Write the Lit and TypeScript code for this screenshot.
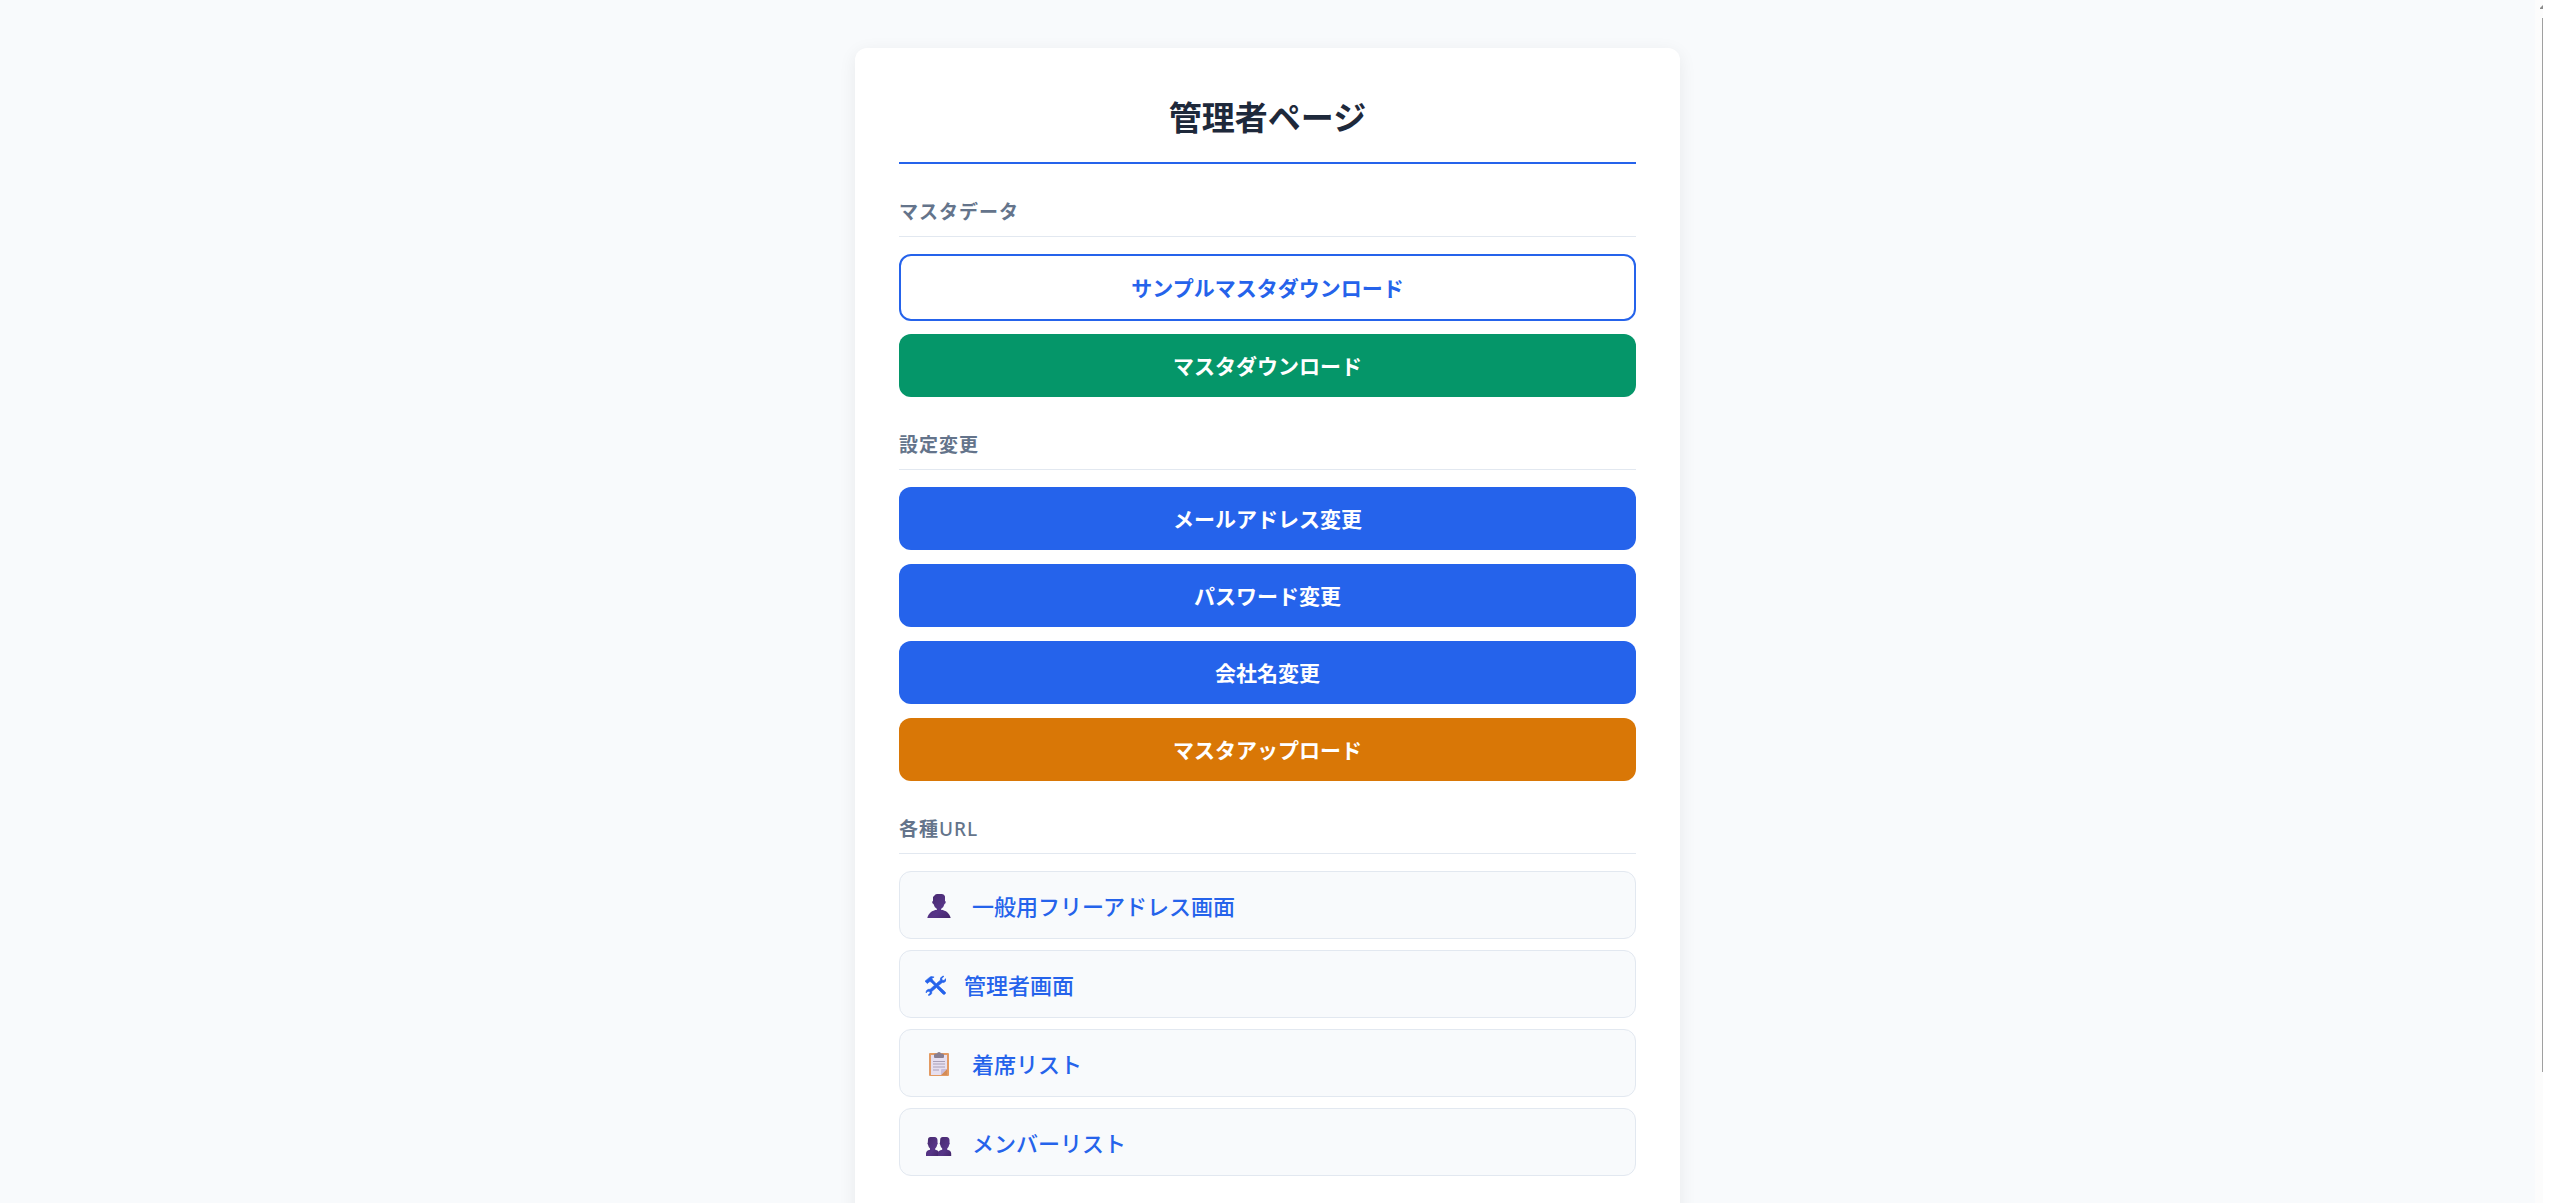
import { LitElement, html, css, svg } from "lit";
import { customElement } from "lit/decorators.js";

interface Action { label: string; tone: string; }

const masterActions: Action[] = [
  { label: "サンプルマスタダウンロード", tone: "outline" },
  { label: "マスタダウンロード", tone: "green" },
];

const settingActions: Action[] = [
  { label: "メールアドレス変更", tone: "blue" },
  { label: "パスワード変更", tone: "blue" },
  { label: "会社名変更", tone: "blue" },
  { label: "マスタアップロード", tone: "orange" },
];

const gradient = (id: string) => svg`<defs><linearGradient id=${id} x1="0" y1="0" x2="1" y2="1">
  <stop offset="0" stop-color="#45286b"/><stop offset="0.6" stop-color="#573588"/><stop offset="1" stop-color="#43256a"/>
</linearGradient></defs>`;

const userIcon = html`<svg class="icon" viewBox="0 -1 30 30" aria-hidden="true">
  ${gradient("user-fill")}
  <path fill="url(#user-fill)" d="M10.5 4.5Q11 3 13 3h5q2.500 0 3 2.500v4.500q1 .3.7 1.600-.3 1.400-1.200 1.500-.6 3.200-3.500 4.900v.7c5 .7 8.500 3.300 9.700 8.300H3.300c1.200-5 4.700-7.600 9.700-8.300v-.7q-2.900-1.700-3.500-4.900-1-.1-1.300-1.500-.2-1.300.8-1.600V6z"/>
</svg>`;

const toolsIcon = html`<svg class="icon tools" viewBox="0 0 22 30" aria-hidden="true">
  <path transform="translate(0 3.5) scale(1 .92)" fill="#2563eb" stroke="#2563eb" stroke-width=".7" d="M1 9.500 5.500 5.300q1.200-1 2.800-.8l1.800.5-2.400 1.500 1.200 2 3.300 3.800 4.200-4q-.5-2.600 1.600-3.900 1-.6 2-.3L17.700 6.500l.4 1.900 1.900.3 2-2.200q.5 2.500-1.300 3.900-1.100.8-2.500.5l-3.800 3.400 7 7.200q.5 1.300-.5 2t-2-.2l-6.500-7-4.700 4.400q.6 2.600-1.400 3.700-1.100.6-2.200.2l2.100-2.200-.4-1.700-1.800-.4-2 1.800q-.1-2.400 1.700-3.500 1.200-.6 2.400-.3l4.400-4.400L7 10.200q-1.200-.7-2.200.3L3.400 12z"/>
</svg>`;

const clipboardIcon = html`<svg class="icon" viewBox="0 -2 30 30" aria-hidden="true">
  <rect x="5" y="3" width="20" height="23" rx="1" fill="#e39a62"/>
  <path d="M7 5h16v14l-6 6H7z" fill="#e6dff0"/>
  <path d="M23 19v6h-6z" fill="#d38c58"/>
  <path d="M17 25v-5q0-1 1-1h5z" fill="#c9bddb"/>
  <path d="M10 7V5q0-1.500 2-1.500h1Q13.200 2 15 2t2 1.500h1q2 0 2 1.500v2q0 1-1 1h-8q-1 0-1-1z" fill="#897f91"/>
  <path d="M9 11.500h12M9 14h12M9 17h12M9 20h6" stroke="#aaa0b8" stroke-width="1"/>
</svg>`;

const usersIcon = html`<svg class="icon" viewBox="0 -2.500 30 30" aria-hidden="true">
  ${gradient("users-fill")}
  <g fill="url(#users-fill)">
    <path d="M4 10q0-2.500 2.500-2.500h4Q13.500 7.500 13.500 11v2q.8.8-.3 2.300-.4 2.300-2 3.700v1.200q4 .8 4 3.800v2.500H2V24q0-3 4-3.800V19q-1.600-1.400-2-3.700-1.100-1.500-.2-2.300z"/>
    <path d="M16.200 10q0-2.500 2.500-2.500h3.800q3 0 3 3.500v2q.8.800-.3 2.300-.4 2.300-2 3.700v1.200q4 .8 4 3.800v2.500H14V24q0-3 4.200-3.800V19q-1.600-1.400-2-3.700-1.100-1.500-.2-2.300z"/>
  </g>
</svg>`;

const links = [
  { label: "一般用フリーアドレス画面", icon: userIcon },
  { label: "管理者画面", icon: toolsIcon },
  { label: "着席リスト", icon: clipboardIcon },
  { label: "メンバーリスト", icon: usersIcon },
];

@customElement("app-root")
export class AppRoot extends LitElement {
  static styles = css`
    :host {
      display: flex;
      height: 100vh;
      overflow: hidden;
      background: #f8fafc;
      font-family: "Noto Sans", "Noto Sans CJK JP", sans-serif;
    }
    * { box-sizing: border-box; }
    .page {
      flex: 1;
      padding: 48px 24px;
      overflow: hidden;
    }
    .card {
      max-width: 825px;
      margin: 0 auto;
      padding: 44px 44px 60px;
      border-radius: 12px;
      background: #fff;
      box-shadow: 0 4px 18px rgba(0, 0, 0, 0.07);
    }
    h1 {
      margin: 0;
      padding-bottom: 21px;
      border-bottom: 2px solid #2563eb;
      color: #1e293b;
      font: 700 33px/49px "Noto Sans CJK JP", sans-serif;
      text-align: center;
    }
    h2 {
      margin: 32px 0 17px;
      padding: 1px 0 8px;
      border-bottom: 1px solid #e2e8f0;
      color: #64748b;
      font-size: 19px;
      font-weight: 600;
      line-height: 31px;
      letter-spacing: 1px;
    }
    .latin { font-weight: 500; }
    .stack { display: flex; flex-direction: column; gap: 14px; }
    .compact { gap: 13px; }
    .button {
      width: 100%;
      padding: 16px 24px;
      border: 0;
      border-radius: 12px;
      color: #fff;
      font: 700 21px/31px "Noto Sans CJK JP", sans-serif;
      cursor: pointer;
    }
    .outline {
      border: 2px solid #2563eb;
      background: #fff;
      color: #2563eb;
    }
    .green { background: #059669; }
    .blue { background: #2563eb; }
    .orange { background: #d97706; }
    .links { gap: 11px; }
    .link {
      display: flex;
      align-items: center;
      gap: 18px;
      padding: 17px 24px;
      border: 1px solid #e2e8f0;
      border-radius: 12px;
      background: #f8fafc;
      color: #2563eb;
      font: 500 22px/32px "Noto Sans CJK JP", sans-serif;
      text-decoration: none;
    }
    .icon { flex: none; width: 30px; height: 30px; }
    .tools { width: 22px; }
    .scrollbar {
      display: flex;
      flex-direction: column;
      align-items: flex-end;
      width: 17px;
      padding: 5px 9px 0 0;
      background: linear-gradient(90deg, #fcfcfc 8px, #fff 8px);
    }
    .arrow { width: 3px; height: 4px; margin-bottom: 9px; }
    .thumb { width: 1px; height: 88%; background: #a0a0a0; }
  `;

  private buttons(actions: Action[], spacing = "") {
    return html`<div class="stack ${spacing}">
      ${actions.map((a) => html`<button class="button ${a.tone}" type="button">${a.label}</button>`)}
    </div>`;
  }

  render() {
    return html`
      <div class="page">
        <main class="card">
          <h1>管理者ページ</h1>
          <h2>マスタデータ</h2>
          ${this.buttons(masterActions, "compact")}
          <h2>設定変更</h2>
          ${this.buttons(settingActions)}
          <h2>各種<span class="latin">URL</span></h2>
          <nav class="stack links">
            ${links.map((l) => html`<a class="link" href="#">${l.icon}<span>${l.label}</span></a>`)}
          </nav>
        </main>
      </div>
      <div class="scrollbar" aria-hidden="true">
        <svg class="arrow" viewBox="0 0 3 4"><path d="M3 0V4H0V3z" fill="#8b8b8b"/></svg>
        <div class="thumb"></div>
      </div>
    `;
  }
}
